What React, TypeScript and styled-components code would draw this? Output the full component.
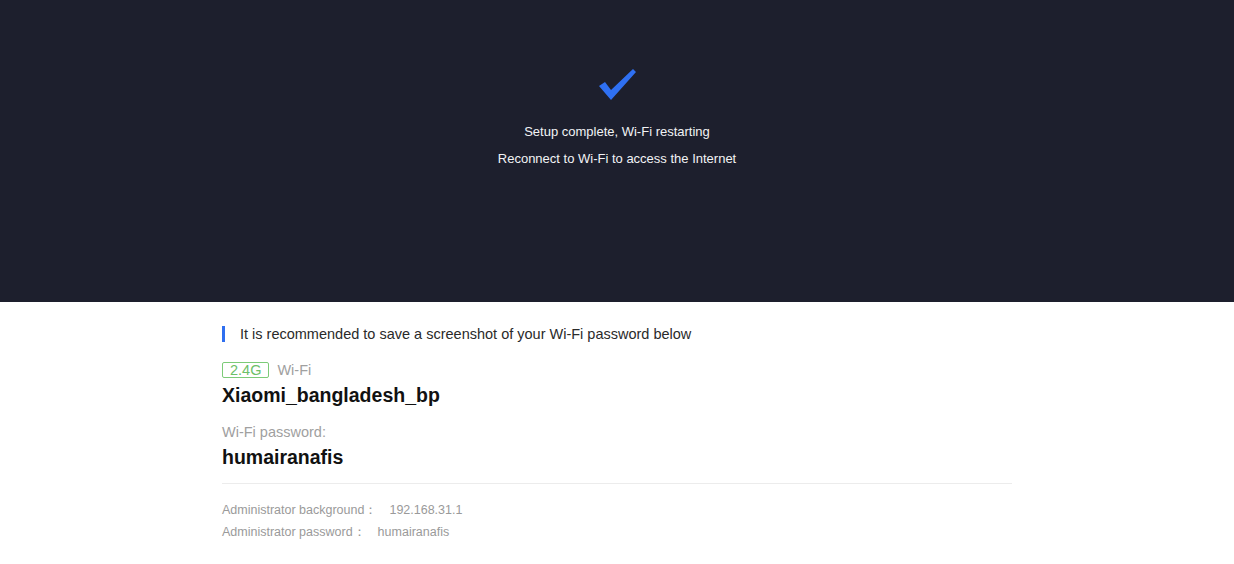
import React from "react";
import styled, { createGlobalStyle } from "styled-components";

const GlobalStyle = createGlobalStyle`
  html, body {
    margin: 0;
    padding: 0;
    background: #ffffff;
    font-family: "Liberation Sans", Arial, sans-serif;
  }
`;

const Page = styled.div`
  display: flex;
  flex-direction: column;
  min-height: 564px;
`;

const Hero = styled.header`
  height: 302px;
  background: #1d1f2d;
  display: flex;
  flex-direction: column;
  align-items: center;
  padding-top: 66px;
  box-sizing: border-box;
  color: #ffffff;
`;

const CheckIcon = styled.svg`
  width: 40px;
  height: 36px;
  margin-bottom: 16px;
`;

const HeroLine = styled.p`
  margin: 0;
  font-size: 13px;
  line-height: 27px;
  color: #f2f3f5;
`;

const Body = styled.main`
  width: 790px;
  margin: 0 auto;
  padding-top: 22px;
`;

const Tip = styled.div`
  display: flex;
  align-items: center;
  gap: 15px;
  font-size: 14.5px;
  color: #2a2a2a;
  height: 20px;

  &::before {
    content: "";
    width: 3px;
    height: 16px;
    background: #2f6ff0;
  }
`;

const Band = styled.div`
  display: flex;
  align-items: center;
  gap: 8px;
  margin-top: 17px;
  height: 18px;
`;

const Badge = styled.span`
  border: 1px solid #7ccb78;
  border-radius: 2px;
  color: #6cc068;
  font-size: 14.5px;
  line-height: 14px;
  padding: 0 7px;
`;

const Label = styled.span`
  font-size: 14.5px;
  color: #a0a0a0;
`;

const Value = styled.div`
  font-size: 19.5px;
  font-weight: 700;
  color: #111111;
  margin-top: 4px;
  line-height: 24px;
`;

const FieldLabel = styled.div`
  font-size: 14.5px;
  color: #a0a0a0;
  margin-top: 16px;
  line-height: 18px;
`;

const Divider = styled.hr`
  border: none;
  height: 1px;
  background: #ececec;
  margin: 14px 0 15px;
`;

const InfoRow = styled.div`
  font-size: 12.5px;
  color: #9a9a9a;
  line-height: 22px;
`;

const InfoValue = styled.span`
  margin-left: 12px;
`;

export default function App() {
  return (
    <Page>
      <GlobalStyle />
      <Hero>
        <CheckIcon viewBox="0 0 40 36">
          <path
            d="M2 20 L8 16 L14 24 L36 3 L39 6 L14 34 Z"
            fill="#2f70f2"
            strokeLinejoin="round"
          />
        </CheckIcon>
        <HeroLine>Setup complete, Wi-Fi restarting</HeroLine>
        <HeroLine>Reconnect to Wi-Fi to access the Internet</HeroLine>
      </Hero>
      <Body>
        <Tip>It is recommended to save a screenshot of your Wi-Fi password below</Tip>
        <Band>
          <Badge>2.4G</Badge>
          <Label>Wi-Fi</Label>
        </Band>
        <Value>Xiaomi_bangladesh_bp</Value>
        <FieldLabel>Wi-Fi password:</FieldLabel>
        <Value>humairanafis</Value>
        <Divider />
        <InfoRow>
          Administrator background：<InfoValue>192.168.31.1</InfoValue>
        </InfoRow>
        <InfoRow>
          Administrator password：<InfoValue>humairanafis</InfoValue>
        </InfoRow>
      </Body>
    </Page>
  );
}
